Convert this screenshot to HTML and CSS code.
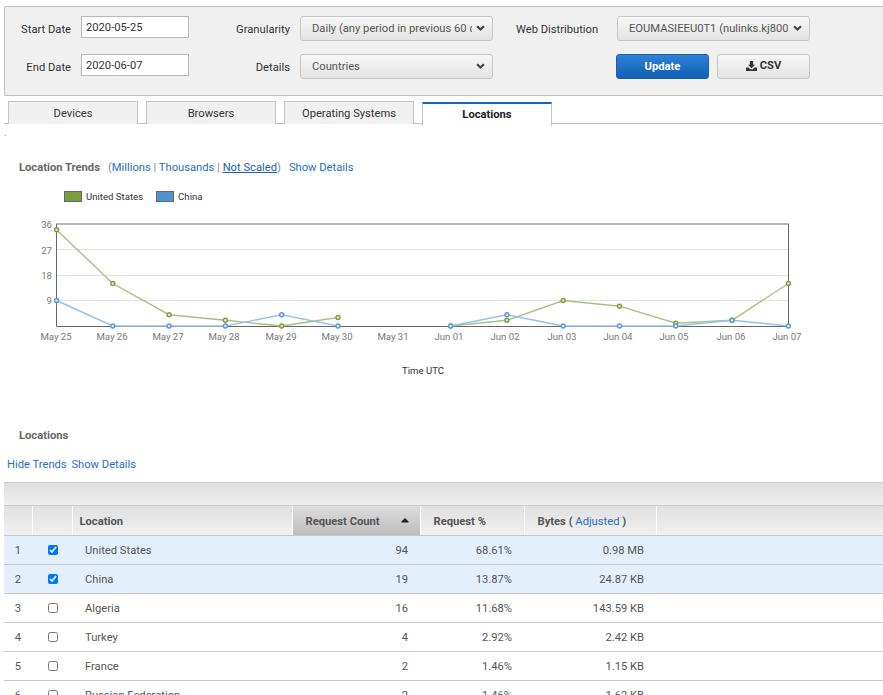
FILE: index.html
```html
<!DOCTYPE html>
<html lang="en">
<head>
<meta charset="utf-8">
<title>Locations</title>
<link rel="stylesheet" href="styles.css">
</head>
<body>
<section class="filters">
  <div class="filter-row">
    <label class="lbl lbl-a">Start Date</label>
    <input class="date" type="text" value="2020-05-25">
    <label class="lbl lbl-b">Granularity</label>
    <div class="sel sel-wide"><span class="sel-text">Daily (any period in previous 60 days)</span><svg class="chev" viewBox="0 0 10 7"><path d="M1 1.5 5 5.2 9 1.5"/></svg></div>
    <label class="lbl lbl-c">Web Distribution</label>
    <div class="sel sel-dist"><span class="sel-text">EOUMASIEEU0T1 (nulinks.kj800.com)</span><svg class="chev" viewBox="0 0 10 7"><path d="M1 1.5 5 5.2 9 1.5"/></svg></div>
  </div>
  <div class="filter-row">
    <label class="lbl lbl-a">End Date</label>
    <input class="date" type="text" value="2020-06-07">
    <label class="lbl lbl-b">Details</label>
    <div class="sel sel-wide"><span class="sel-text">Countries</span><svg class="chev" viewBox="0 0 10 7"><path d="M1 1.5 5 5.2 9 1.5"/></svg></div>
    <button class="btn btn-primary" type="button">Update</button>
    <button class="btn btn-csv" type="button"><svg class="dl" viewBox="0 0 12 11"><path d="M4.2 0h3.6v4h2.2L6 8 2 4h2.2z"/><path d="M0 7.2h2.6L4.6 9.2h2.8l2-2H12V11H0z"/></svg>CSV</button>
  </div>
</section>

<nav class="tabs">
  <a class="tab">Devices</a>
  <a class="tab">Browsers</a>
  <a class="tab">Operating Systems</a>
  <a class="tab tab-active">Locations</a>
</nav>
<div class="dot">.</div>

<div class="trend-head">
  <strong class="section-title">Location Trends</strong>
  <span class="scale">(<a>Millions</a> | <a>Thousands</a> | <a class="current">Not Scaled</a>)</span>
  <a class="show">Show Details</a>
</div>

<div class="legend">
  <span class="key key-us"></span><span class="key-name">United States</span>
  <span class="key key-cn"></span><span class="key-name">China</span>
</div>

<svg class="chart" viewBox="0 0 883 180" width="883" height="180">
  <g transform="translate(0,-207)">
    <path class="grid" d="M56.5 249.5H788M56.5 275.5H788M56.5 300.5H788"/>
    <path class="top" d="M56 224H789"/>
    <path class="axis" d="M56.5 224V326.5H788.5V224"/>
    <polyline class="line-us" points="56.5,229.7 112.8,283.5 169.1,314.7 225.4,320.3 281.7,326 338,317.5"/>
    <polyline class="line-us" points="450.6,326 506.9,320.3 563.2,300.5 619.5,306.2 675.8,323.2 732.1,320.3 788.4,283.5"/>
    <polyline class="line-cn" points="56.5,300.5 112.8,326 169.1,326 225.4,326 281.7,314.7 338,326"/>
    <polyline class="line-cn" points="450.6,326 506.9,314.7 563.2,326 619.5,326 675.8,326 732.1,320.3 788.4,326"/>
    <g class="pt-us">
      <circle cx="56.5" cy="229.7" r="2"/><circle cx="112.8" cy="283.5" r="2"/><circle cx="169.1" cy="314.7" r="2"/><circle cx="225.4" cy="320.3" r="2"/><circle cx="281.7" cy="326" r="2"/><circle cx="338" cy="317.5" r="2"/>
      <circle cx="450.6" cy="326" r="2"/><circle cx="506.9" cy="320.3" r="2"/><circle cx="563.2" cy="300.5" r="2"/><circle cx="619.5" cy="306.2" r="2"/><circle cx="675.8" cy="323.2" r="2"/><circle cx="732.1" cy="320.3" r="2"/><circle cx="788.4" cy="283.5" r="2"/>
    </g>
    <g class="pt-cn">
      <circle cx="56.5" cy="300.5" r="2"/><circle cx="112.8" cy="326" r="2"/><circle cx="169.1" cy="326" r="2"/><circle cx="225.4" cy="326" r="2"/><circle cx="281.7" cy="314.7" r="2"/><circle cx="338" cy="326" r="2"/>
      <circle cx="450.6" cy="326" r="2"/><circle cx="506.9" cy="314.7" r="2"/><circle cx="563.2" cy="326" r="2"/><circle cx="619.5" cy="326" r="2"/><circle cx="675.8" cy="326" r="2"/><circle cx="732.1" cy="320.3" r="2"/><circle cx="788.4" cy="326" r="2"/>
    </g>
    <g class="ylab">
      <text x="52" y="228">36</text><text x="52" y="254">27</text><text x="52" y="279">18</text><text x="52" y="304">9</text>
    </g>
    <g class="xlab">
      <text x="56" y="340">May 25</text><text x="112" y="340">May 26</text><text x="168" y="340">May 27</text><text x="224" y="340">May 28</text><text x="281" y="340">May 29</text><text x="337" y="340">May 30</text><text x="393" y="340">May 31</text><text x="449" y="340">Jun 01</text><text x="505" y="340">Jun 02</text><text x="562" y="340">Jun 03</text><text x="618" y="340">Jun 04</text><text x="674" y="340">Jun 05</text><text x="731" y="340">Jun 06</text><text x="787" y="340">Jun 07</text>
    </g>
    <text class="xtitle" x="423" y="374">Time UTC</text>
  </g>
</svg>

<div class="loc-title"><strong class="section-title">Locations</strong></div>
<div class="loc-links"><a>Hide Trends</a> <a class="gap">Show Details</a></div>

<div class="grid-wrap">
  <div class="toolbar"></div>
  <table class="data">
    <colgroup><col class="c1"><col class="c2"><col class="c3"><col class="c4"><col class="c5"><col class="c6"><col></colgroup>
    <thead>
      <tr>
        <th></th><th></th><th>Location</th>
        <th class="sorted"><span class="th-in">Request Count<svg class="sort" viewBox="0 0 8 5"><path d="M4 0 7.5 3.4V4.5H.5V3.4z"/></svg></span></th>
        <th>Request %</th>
        <th>Bytes ( <a>Adjusted</a> )</th>
        <th></th>
      </tr>
    </thead>
    <tbody>
      <tr class="on"><td class="n">1</td><td class="ck"><input type="checkbox" checked></td><td class="name">United States</td><td class="r">94</td><td class="r">68.61%</td><td class="r">0.98 MB</td><td></td></tr>
      <tr class="on"><td class="n">2</td><td class="ck"><input type="checkbox" checked></td><td class="name">China</td><td class="r">19</td><td class="r">13.87%</td><td class="r">24.87 KB</td><td></td></tr>
      <tr><td class="n">3</td><td class="ck"><input type="checkbox"></td><td class="name">Algeria</td><td class="r">16</td><td class="r">11.68%</td><td class="r">143.59 KB</td><td></td></tr>
      <tr><td class="n">4</td><td class="ck"><input type="checkbox"></td><td class="name">Turkey</td><td class="r">4</td><td class="r">2.92%</td><td class="r">2.42 KB</td><td></td></tr>
      <tr><td class="n">5</td><td class="ck"><input type="checkbox"></td><td class="name">France</td><td class="r">2</td><td class="r">1.46%</td><td class="r">1.15 KB</td><td></td></tr>
      <tr><td class="n">6</td><td class="ck"><input type="checkbox"></td><td class="name">Russian Federation</td><td class="r">2</td><td class="r">1.46%</td><td class="r">1.62 KB</td><td></td></tr>
    </tbody>
  </table>
</div>
</body>
</html>
```
FILE: styles.css
```css
html, body { margin: 0; padding: 0; height: 695px; overflow: hidden; background: #fff; }
body { font-family: Roboto, "Liberation Sans", sans-serif; font-size: 11.2px; color: #444; width: 883px; }
a { color: #1f6fc4; text-decoration: none; }

.filters { box-sizing: border-box; margin: 6px 0 0 4px; width: 879px; height: 90px; background: #f0f0f0; border: 1px solid #bfbfbf; border-right: 0; border-radius: 2px 0 0 2px; padding: 9px 0 0 0; display: flex; flex-direction: column; gap: 13px; }
.filter-row { display: flex; align-items: flex-start; height: 25px; }
.lbl { text-align: right; color: #333; line-height: 27px; height: 25px; flex: none; white-space: nowrap; }
.lbl-a { width: 66px; margin-right: 10px; }
.date { box-sizing: border-box; width: 108px; height: 22px; border: 1px solid #b9b9b9; background: #fff; padding: 0 4px; font: 11.2px Roboto, sans-serif; color: #333; margin: 0; }
.lbl-b { width: 101px; margin-right: 10px; }
.lbl-c { width: 82px; margin: 0 19px 0 23px; }
.sel { box-sizing: border-box; height: 25px; border: 1px solid #c6c6c6; border-radius: 3px; background: linear-gradient(#f7f7f7, #e3e3e3); display: flex; align-items: center; padding: 0 7px 0 11px; color: #555; flex: none; padding-bottom: 1px; }
.sel-wide { width: 193px; }
.sel-dist { width: 193px; }
.sel-text { flex: 1; overflow: hidden; white-space: nowrap; min-width: 0; margin-right: 4px; }
.sel-dist .sel-text { margin-right: 5px; }
.chev { width: 9px; height: 6px; flex: none; fill: none; stroke: #444; stroke-width: 2.6; }
.btn { box-sizing: border-box; height: 25px; border-radius: 3px; font: 700 11.2px Roboto, sans-serif; margin: 0; padding: 0; flex: none; display: flex; align-items: center; justify-content: center; }
.btn-primary { width: 93px; margin-left: 123px; background: linear-gradient(#2f81d6, #0f5fb5); border: 1px solid #1a5fa8; color: #fff; }
.btn-csv { width: 93px; margin-left: 8px; background: linear-gradient(#f7f7f7, #e3e3e3); border: 1px solid #c6c6c6; color: #333; padding-bottom: 2px; }
.dl { width: 11px; height: 10px; fill: #333; margin-right: 3px; }

.tabs { box-sizing: border-box; display: flex; gap: 8px; height: 28px; margin: 0 0 0 4px; padding: 5px 0 0 4px; border-bottom: 1px solid #bdbdbd; }
.tab { box-sizing: border-box; width: 130px; height: 23px; background: #f0f0f0; border: 1px solid #c4c4c4; border-bottom: 0; color: #333; text-align: center; line-height: 23px; }
.tab-active { background: #fff; border-top: 2px solid #1565c0; border-color: #c4c4c4; border-top-color: #1565c0; height: 24px; font-weight: 700; color: #222; line-height: 21px; margin-top: 1px; }

.dot { height: 15px; line-height: 19px; padding-left: 4px; color: #333; font-size: 9px; overflow: hidden; }
.trend-head { margin-top: 21px; padding-left: 19px; height: 16px; line-height: 16px; display: flex; white-space: pre; }
.section-title { color: #666; font-weight: 700; }
.scale { color: #888; margin-left: 8px; }
.current { text-decoration: underline; color: #1a5fa8; }
.show { margin-left: 8px; }
.legend { display: flex; align-items: center; height: 14px; margin-top: 13px; padding-left: 64px; font-size: 9.6px; color: #333; }
.key { box-sizing: border-box; width: 18px; height: 11px; border: 1px solid #666; margin-right: 4px; }
.key-us { background: #7a9e3e; }
.key-cn { background: #4f93d1; }
.key-name { margin-right: 13px; }

.chart { display: block; margin-top: 4px; }
.grid { stroke: #e2e2e2; fill: none; }
.top { stroke: #b9b9b9; stroke-width: 2; fill: none; }
.axis { stroke: #666; fill: none; }
.line-us { fill: none; stroke: #a9c084; stroke-width: 1.4; }
.line-cn { fill: none; stroke: #96c1ea; stroke-width: 1.4; }
.pt-us circle { fill: #dfe9cc; stroke: #7a9e3e; stroke-width: 1.4; }
.pt-cn circle { fill: #dcebf8; stroke: #5b9ad6; stroke-width: 1.4; }
.ylab text { font: 9.6px Roboto, sans-serif; fill: #777; text-anchor: end; }
.xlab text { font: 9.6px Roboto, sans-serif; fill: #777; text-anchor: middle; }
.xtitle { font: 9.6px Roboto, sans-serif; fill: #333; text-anchor: middle; }

.loc-title { margin-top: 41px; padding-left: 19px; height: 16px; line-height: 16px; }
.loc-links { margin-top: 13px; padding-left: 7px; height: 16px; line-height: 16px; }
.gap { margin-left: 2px; }

.grid-wrap { margin: 9px 0 0 4px; width: 879px; }
.toolbar { box-sizing: border-box; height: 24px; background: linear-gradient(#dedede, #efefef); border-top: 1px solid #c8c8c8; border-bottom: 1px solid #c8c8c8; }
.data { width: 879px; border-collapse: collapse; table-layout: fixed; }
.c1 { width: 28px; } .c2 { width: 40px; } .c3 { width: 220px; } .c4 { width: 128px; } .c5 { width: 104px; } .c6 { width: 132px; }
.data th { box-sizing: border-box; height: 29px; padding: 2px 0 0 7px; text-align: left; font-weight: 700; color: #555; background: linear-gradient(#e0e0e0, #f0f0f0); border-bottom: 1px solid #c8c8c8; border-right: 1px solid #fff; white-space: nowrap; }
.data th:last-child { border-right: 0; }
.data th.sorted { background: linear-gradient(#dcdcdc, #bdbdbd); padding-left: 13px; }
.th-in { display: flex; align-items: center; justify-content: space-between; padding-right: 11px; }
.data th:nth-child(5) { padding-left: 13px; }
.data th:nth-child(6) { padding-left: 13px; }
.data th a { font-weight: 400; }
.sort { width: 8px; height: 5px; fill: #222; margin-top: -2px; }
.data td { box-sizing: border-box; height: 29px; padding: 2px 0 0; border-bottom: 1px solid #c8c8c8; color: #555; }
.on td { background: #e3f0fc; }
.n { text-align: center; }
.data td.ck { text-align: center; padding: 0 0 0 1px; }
.ck input { margin: 0; display: inline-block; vertical-align: middle; width: 10px; height: 10px; }
.data td.name { padding-left: 13px; }
.data td.r { text-align: right; padding-right: 12px; }
```
